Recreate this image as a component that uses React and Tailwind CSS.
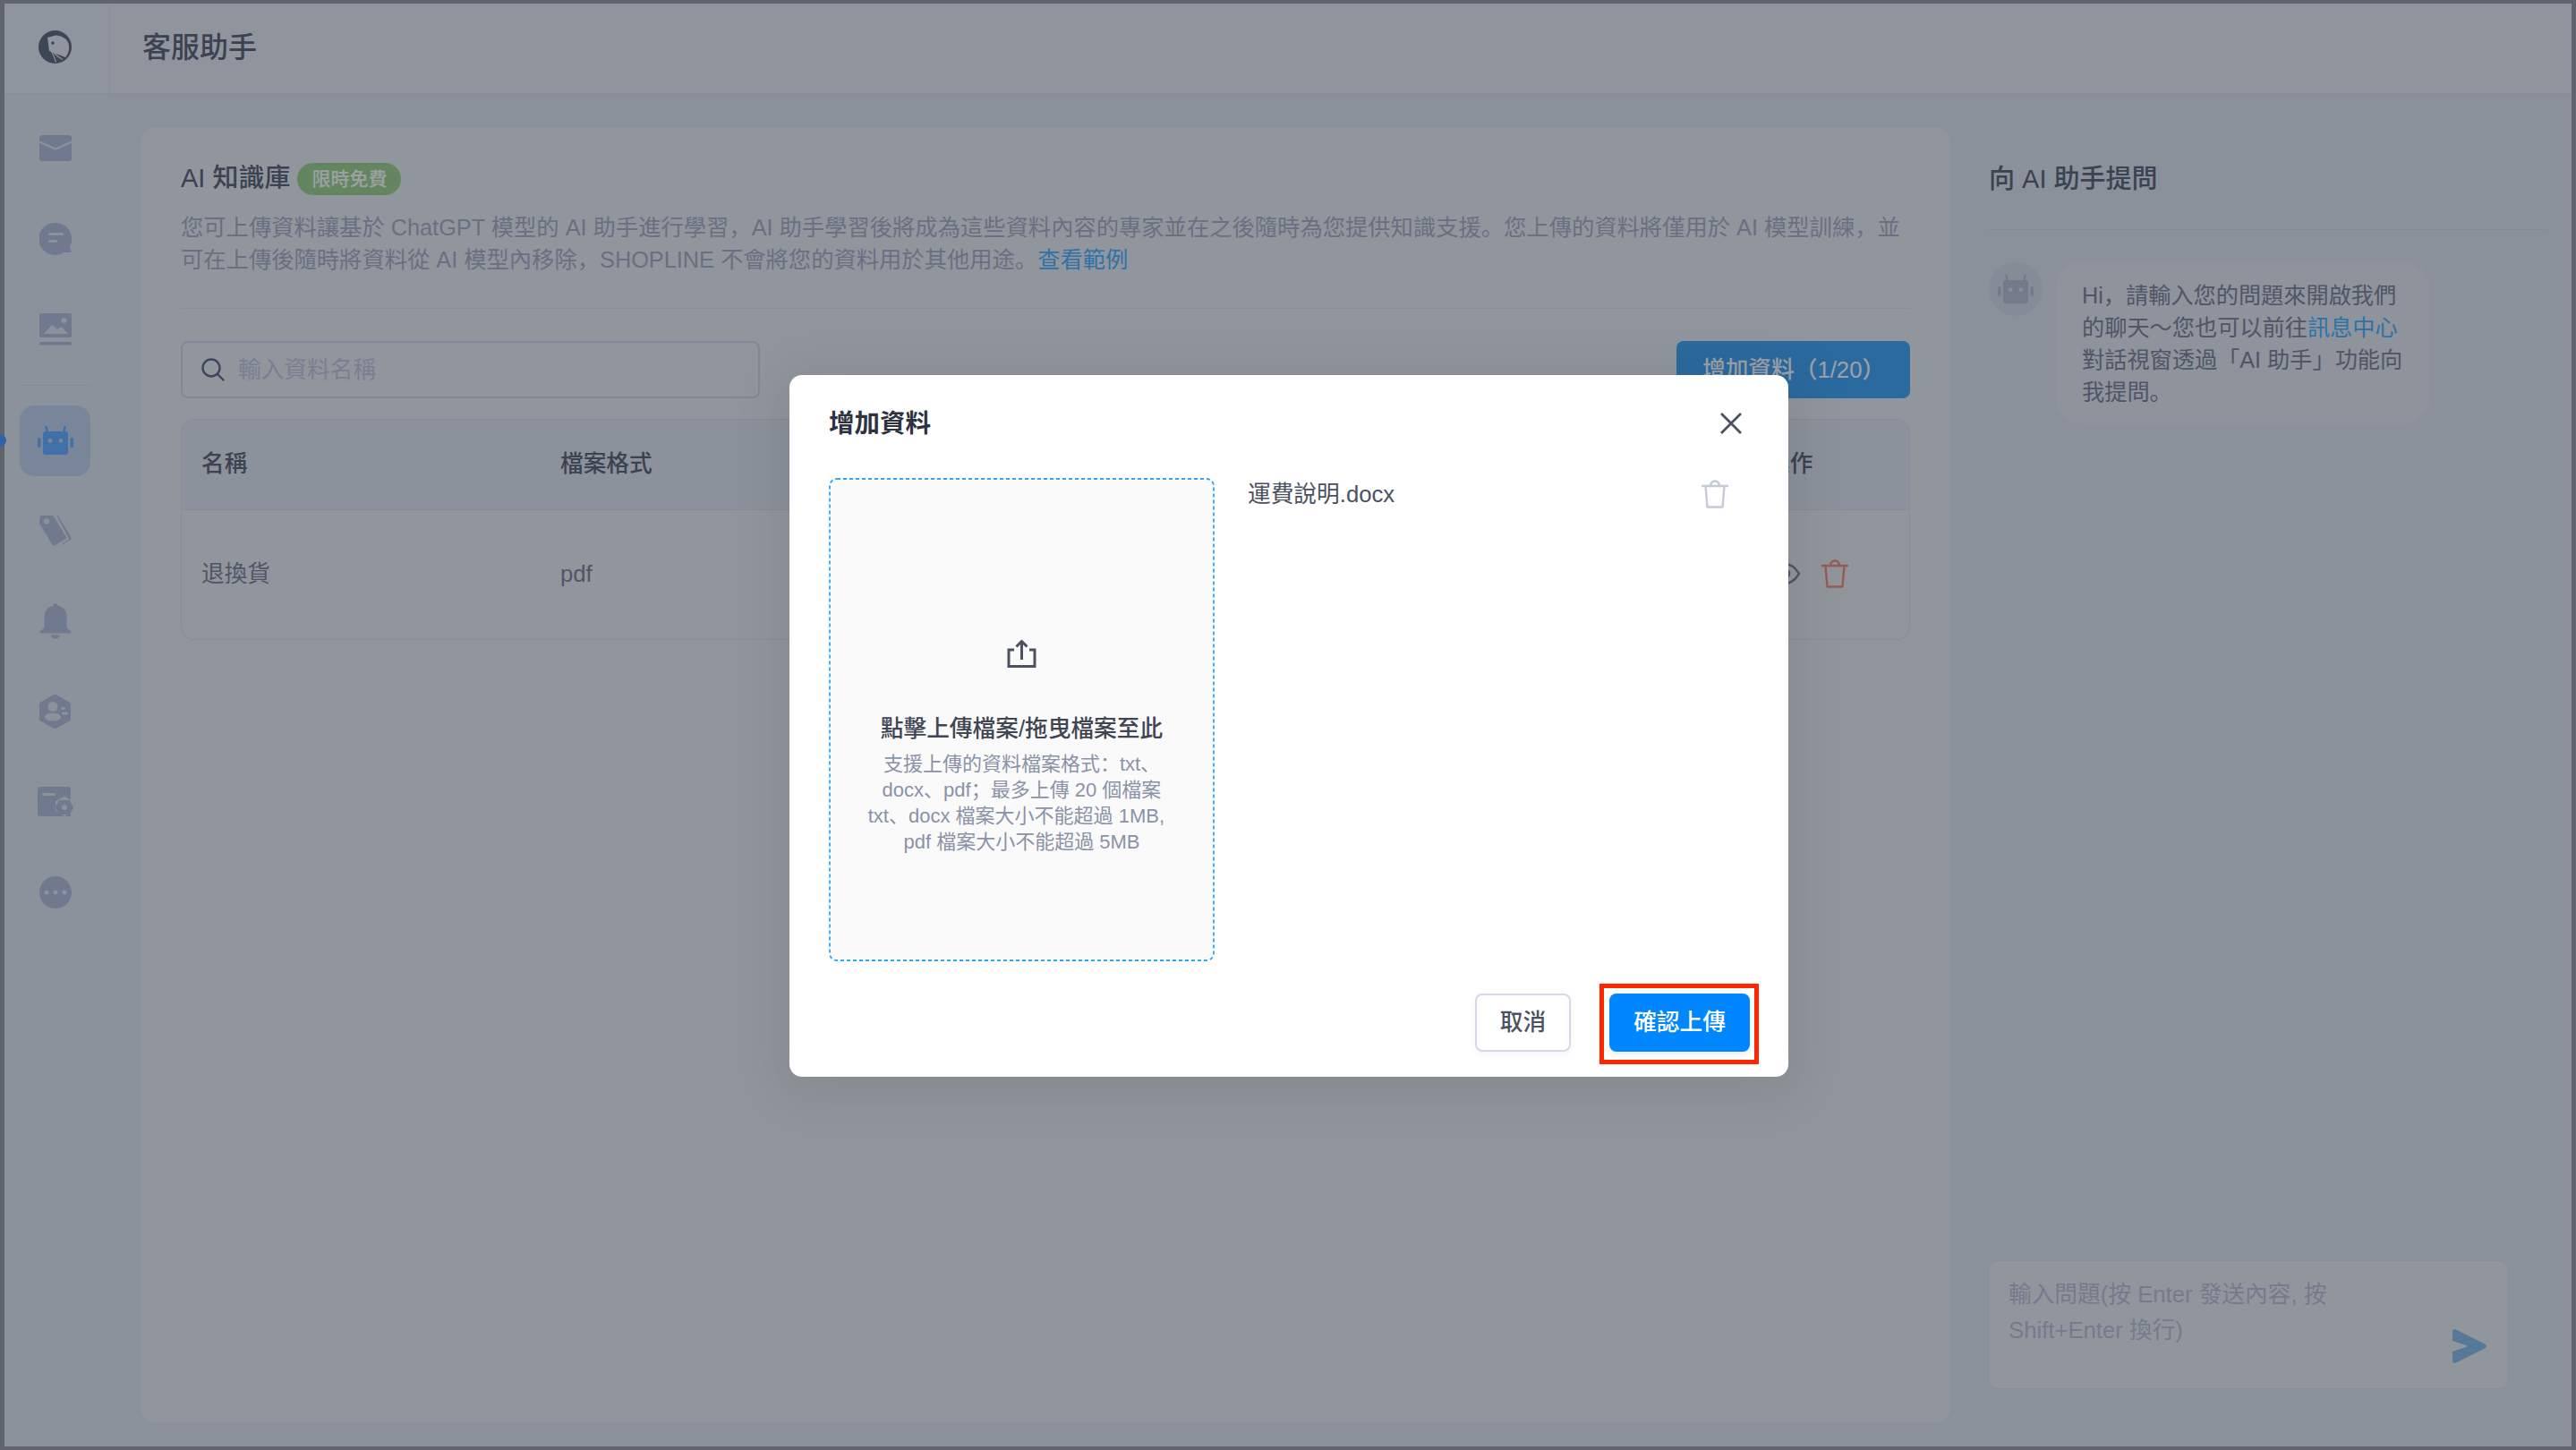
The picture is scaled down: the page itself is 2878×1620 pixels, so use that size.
import React from "react";

const Trash = ({ className }) => (
  <svg className={className} viewBox="0 0 30 32" fill="none" stroke="currentColor" strokeWidth="2.4" strokeLinejoin="round" strokeLinecap="round">
    <path d="M1 7h28" />
    <path d="M4.5 7l2 23.5h17l2-23.5" />
    <path d="M10 7c.3-3.5 2.3-5.5 5-5.5s4.700 2 5 5.500" />
  </svg>
);

const Mail = () => (
  <svg width="36" height="29" viewBox="0 0 36 29">
    <rect width="36" height="29" rx="3" fill="#b6bcd7" />
    <path d="M0 7.500l18 8 18-8" fill="none" stroke="#e2e6ec" strokeWidth="2.400" />
  </svg>
);
const Chat = () => (
  <svg width="36" height="36" viewBox="0 0 36 36">
    <path d="M18 0a18 18 0 0 1 16 26.500l1.500 5c.3 1-.4 1.500-1 1.500H27a18 18 0 1 1-9-33z" fill="#b6bcd7" />
    <rect x="10" y="11" width="17" height="3" rx="1.500" fill="#e2e6ec" />
    <rect x="10" y="19" width="10" height="3" rx="1.500" fill="#e2e6ec" />
  </svg>
);
const ImageIcon = () => (
  <svg width="36" height="36" viewBox="0 0 36 36">
    <rect width="36" height="27" rx="2" fill="#b6bcd7" />
    <path d="M5 23l8-9c1-1 2-1 3 0l4 4 3-2c1-.7 2-.7 3 0l6 7z" fill="#e2e6ec" />
    <circle cx="27.500" cy="8" r="3" fill="#e2e6ec" />
    <rect y="32" width="36" height="3.500" rx="1.700" fill="#b6bcd7" />
  </svg>
);
const Robot = ({ color, eye, className }) => (
  <svg className={className} viewBox="0 0 40 32" fill={color}>
    <rect x="6" y="6" width="28" height="26" rx="3" />
    <path d="M11 7L9.500 1M29 7l1.500-6" stroke={color} strokeWidth="2.400" strokeLinecap="round" />
    <rect x="0" y="13" width="3.500" height="11" rx="1.700" />
    <rect x="36.500" y="13" width="3.500" height="11" rx="1.700" />
    <circle cx="14" cy="16.500" r="2.400" fill={eye} />
    <circle cx="26" cy="16.500" r="2.400" fill={eye} />
  </svg>
);
const Tags = () => (
  <svg width="36" height="36" viewBox="0 0 36 36" fill="#b6bcd7">
    <path d="M21 1.500l14.500 24c.5 1 .2 2-.7 2.500l-10 6c-.5.300-.8-.5-.3-.8l8-5.200c.6-.4.800-1 .4-1.700L20 2.500c-.4-.7.600-1.600 1-1z" />
    <path d="M3 1h11c1 0 1.700.4 2.200 1.200L30 25c.5.900.2 1.800-.6 2.300L17 34.500c-.9.500-1.800.300-2.300-.5L.6 11C.2 10.400 0 9.700 0 9l.5-5.500C.6 2 1.500 1 3 1z" />
    <circle cx="8" cy="7.500" r="3.200" fill="#e2e6ec" />
  </svg>
);
const Bell = () => (
  <svg width="36" height="40" viewBox="0 0 36 40" fill="#b6bcd7">
    <path d="M18 0c1.500 0 2.300 1 2.300 2.500C27 4 30.500 9 30.500 15v11c0 2 2.500 3.500 4.500 5 1.300 1 .8 2.500-.7 2.500H1.700C.2 33.500-.3 32 1 31c2-1.500 4.500-3 4.500-5V15c0-6 3.500-11 10.200-12.500C15.700 1 16.500 0 18 0z" />
    <path d="M13 35.500h10c-.5 2.500-2.500 4-5 4s-4.500-1.500-5-4z" />
  </svg>
);
const HexUser = () => (
  <svg width="35" height="38" viewBox="0 0 35 38">
    <path d="M17.500 0l17 9.500v19L17.500 38 .5 28.500v-19z" fill="#b6bcd7" stroke="#b6bcd7" strokeLinejoin="round" />
    <circle cx="15" cy="13.500" r="5.500" fill="#e2e6ec" />
    <ellipse cx="15" cy="25" rx="9" ry="4.500" fill="#e2e6ec" />
    <rect x="24" y="14" width="5" height="3" rx="1.500" fill="#e2e6ec" />
    <rect x="25" y="19.500" width="7" height="3" rx="1.500" fill="#e2e6ec" />
  </svg>
);
const ChatGear = () => (
  <svg width="40" height="33" viewBox="0 0 40 33">
    <path d="M3 0h31c2 0 3 1 3 3v30H6L1.500 32.500C.700 33 0 32.500 0 31.500V3c0-2 1-3 3-3z" fill="#b6bcd7" />
    <rect x="5" y="7" width="15" height="3" rx="1.500" fill="#e2e6ec" />
    <path d="M30 10.500l9.500 5.500v11L30 33l-10-6V16z" fill="#e2e6ec" />
    <path d="M24 15h12l4 8-4 8H24l-4.500-8z" fill="#b6bcd7" />
    <circle cx="30" cy="23" r="3" fill="#e2e6ec" />
  </svg>
);
const Dots = () => (
  <svg width="36" height="36" viewBox="0 0 36 36">
    <circle cx="18" cy="18" r="18" fill="#b6bcd7" />
    <circle cx="8" cy="18" r="2.500" fill="#e2e6ec" />
    <circle cx="18" cy="18" r="2.500" fill="#e2e6ec" />
    <circle cx="28" cy="18" r="2.500" fill="#e2e6ec" />
  </svg>
);
const Logo = () => (
  <svg width="39" height="37" viewBox="0 0 39 37">
    <circle cx="19.500" cy="18.500" r="18.500" fill="#626775" />
    <path d="M11 8l9-2.500c7 .5 12.500 3.500 14.500 9 1.500 5 0 12-3.500 15.500L13 23z" fill="#ebebf2" />
    <path d="M13 19c3 5 6 11 7.500 16.500M14 21c5 5 9 9 14 11.500M14 21l17 8" stroke="#ebebf2" strokeWidth="1.100" fill="none" />
    <circle cx="17" cy="14" r="1.800" fill="#626775" />
  </svg>
);

const NavItem = ({ children }) => <div className="flex h-[101px] w-full items-center justify-center">{children}</div>;

function Sidebar() {
  return (
    <aside className="flex w-[118px] shrink-0 flex-col border-r border-[#dfe2e8] bg-[#e2e6ec]">
      <div className="flex h-[101px] shrink-0 items-center justify-center border-b border-[#dde0e6] bg-[#e7ebf1] pb-[4px] pr-[4px]">
        <Logo />
      </div>
      <nav className="flex flex-col items-center pr-[4px] pt-[10px]">
        <NavItem><Mail /></NavItem>
        <NavItem><Chat /></NavItem>
        <NavItem><ImageIcon /></NavItem>
        <div className="mt-[12px] h-px w-[79px] bg-[#d8dce3]" />
        <div className="relative mt-[22px] flex h-[79px] w-[79px] items-center justify-center rounded-[16px] bg-[#c4d3ea]">
          <span className="absolute left-[-29px] top-[32px] h-[14px] w-[14px] rounded-full bg-[#4896fd]" />
          <Robot color="#67acff" eye="#c4d3ea" className="mb-[2px] h-[32px] w-[40px]" />
        </div>
        <div className="h-[10px]" />
        <NavItem><Tags /></NavItem>
        <NavItem><Bell /></NavItem>
        <NavItem><HexUser /></NavItem>
        <NavItem><ChatGear /></NavItem>
        <NavItem><Dots /></NavItem>
      </nav>
    </aside>
  );
}

function KnowledgeCard() {
  return (
    <section className="ml-[35px] mt-[38px] mb-[27px] flex w-[2020px] shrink-0 flex-col rounded-[14px] bg-[#ecedef] px-[44px] pt-[39px]">
      <div className="flex h-[36px] items-center">
        <h2 className="text-[29px] font-medium text-[#5c6170]">AI 知識庫</h2>
        <span className="ml-[8px] flex h-[36px] w-[116px] items-center justify-center rounded-full bg-[#9fd389] text-[21px] font-medium text-white">限時免費</span>
      </div>
      <p className="mt-[18px] whitespace-nowrap border-b border-[#dfe0e6] pb-[36px] text-[25.300px] leading-[36px] text-[#a9adc0]">
        您可上傳資料讓基於 ChatGPT 模型的 AI 助手進行學習，AI 助手學習後將成為這些資料內容的專家並在之後隨時為您提供知識支援。您上傳的資料將僅用於 AI 模型訓練，並
        <br />
        可在上傳後隨時將資料從 AI 模型內移除，SHOPLINE 不會將您的資料用於其他用途。<span className="text-[#48b1ff]">查看範例</span>
      </p>
      <div className="mt-[36px] flex items-center justify-between">
        <div className="flex h-[64px] w-[647px] items-center rounded-[8px] border-2 border-[#cfd4e3] pl-[21px] text-[25.700px] text-[#c4c7da]">
          <svg width="26" height="26" viewBox="0 0 26 26" fill="none" stroke="#5f6780" strokeWidth="2.400" strokeLinecap="round">
            <circle cx="11" cy="11" r="9.500" />
            <path d="M18 18l6.500 6.500" />
          </svg>
          <span className="ml-[15px]">輸入資料名稱</span>
        </div>
        <button className="h-[64px] w-[261px] rounded-[8px] bg-[#41a3f2] pl-[4px] text-left text-[25.700px] font-medium text-white">
          <span className="ml-[25px]">增加資料（1/20）</span>
        </button>
      </div>
      <div className="mt-[23px] overflow-hidden rounded-[14px] border border-[#dadce3]">
        <div className="flex h-[101px] items-center border-b border-[#dadce3] bg-[#e2e6ec] pb-[2px] pl-[22px] text-[25.700px] font-medium text-[#5c6170]">
          <span className="w-[401px]">名稱</span>
          <span className="w-[1348px]">檔案格式</span>
          <span>操作</span>
        </div>
        <div className="flex h-[144px] items-center pb-[2px] pl-[22px] text-[25.700px] text-[#7d8293]">
          <span className="w-[401px]">退換貨</span>
          <span className="w-[1350px]">pdf</span>
          <svg width="36" height="26" viewBox="0 0 36 26" fill="none" stroke="#7d8293" strokeWidth="2.400">
            <path d="M2 13C7 5 12 2 18 2s11 3 16 11c-5 8-10 11-16 11S7 21 2 13z" />
            <circle cx="18" cy="13" r="5" />
          </svg>
          <Trash className="ml-[23px] h-[32px] w-[30px] text-[#f58a78]" />
        </div>
      </div>
    </section>
  );
}

function AssistantPanel() {
  return (
    <section className="flex flex-1 flex-col pl-[44px] pr-[29px]">
      <h2 className="mt-[38px] flex h-[114px] items-center border-b border-[#d8dbe2] pt-[2px] text-[29px] font-medium text-[#5c6170]">
        向 AI 助手提問
      </h2>
      <div className="mt-[36px] flex gap-[15px]">
        <div className="flex h-[60px] w-[60px] items-center justify-center rounded-full bg-[#d9dde5]">
          <Robot color="#b9becf" eye="#d9dde5" className="h-[32px] w-[40px]" />
        </div>
        <div className="w-[417px] whitespace-nowrap rounded-[28px] bg-[#e7e8ed] pb-[17px] pl-[29px] pr-[20px] pt-[19px] text-[25.200px] leading-[36px] text-[#7d8293]">
          Hi，請輸入您的問題來開啟我們
          <br />
          的聊天～您也可以前往<span className="text-[#48b1ff]">訊息中心</span>
          <br />
          對話視窗透過「AI 助手」功能向
          <br />
          我提問。
        </div>
      </div>
      <div className="relative mb-[64px] mt-auto h-[144px] w-[580px] rounded-[10px] border border-[#dfe1e8] bg-[#ecedef] px-[21px] pt-[17px] text-[25.700px] leading-[40px] text-[#bcc0d2]">
        輸入問題(按 Enter 發送內容, 按
        <br />
        Shift+Enter 換行)
        <svg className="absolute right-[23px] top-[76px]" width="38" height="38" viewBox="0 0 38 38" fill="#8bbce8">
          <path d="M0 3c0-2.500 2-3.500 4-2.500l32 16c2.500 1.300 2.500 3.700 0 5l-32 16c-2 1-4 0-4-2.500V25l16-5.500c.5-.2.5-.8 0-1L0 13z" />
        </svg>
      </div>
    </section>
  );
}

function UploadModal() {
  return (
    <div className="w-[1116px] rounded-[14px] bg-white pt-[36px] shadow-[0_10px_60px_20px_rgba(0,0,0,0.07)]">
      <div className="flex h-[36px] items-center justify-between pl-[44px] pr-[51px]">
        <h3 className="text-[28.500px] font-bold text-[#2d3340]">增加資料</h3>
        <svg width="26" height="26" viewBox="0 0 26 26" fill="none" stroke="#4b5160" strokeWidth="2.800">
          <path d="M2 2l22 22M24 2L2 24" />
        </svg>
      </div>
      <div className="mt-[43px] flex h-[540px] gap-[37px] pl-[44px] pr-[67px]">
        <div className="relative flex h-full w-[431px] shrink-0 flex-col items-center rounded-[8px] bg-[#fafafa] pt-[181px] text-center">
          <svg className="absolute inset-0" width="431" height="540" viewBox="0 0 431 540" fill="none">
            <rect x="1" y="1" width="429" height="538" rx="8" stroke="#2ea6ff" strokeWidth="1.800" strokeDasharray="4 3" />
          </svg>
          <svg width="33" height="31" viewBox="0 0 33 31" fill="none" stroke="#4b5160" strokeWidth="3">
            <path d="M8 11H2v18.500h29V11h-6" />
            <path d="M16.500 22V2M10.500 7.500l6-6 6 6" />
          </svg>
          <div className="mt-[50px] text-[25.700px] font-medium leading-[36px] text-[#3f4552]">點擊上傳檔案/拖曳檔案至此</div>
          <div className="mt-[7px] whitespace-nowrap text-[22px] leading-[29px] text-[#8a92a8]">
            支援上傳的資料檔案格式：txt、
            <br />
            docx、pdf；最多上傳 20 個檔案
            <br />
            txt、docx 檔案大小不能超過 1MB,{"\u00A0\u00A0"}
            <br />
            pdf 檔案大小不能超過 5MB
          </div>
        </div>
        <div className="flex h-[36px] flex-1 items-center justify-between">
          <span className="text-[25.700px] text-[#4b5160]">運費說明.docx</span>
          <Trash className="h-[32px] w-[30px] text-[#c5cad8]" />
        </div>
      </div>
      <div className="mt-[36px] flex justify-end gap-[43px] pb-[28px] pr-[43px]">
        <button className="h-[65px] w-[107px] rounded-[8px] border-2 border-[#d4d9e8] bg-white text-[25.700px] font-medium text-[#4b5160] shadow-[0_3px_6px_rgba(60,80,140,0.06)]">取消</button>
        <div className="relative">
          <button className="h-[65px] w-[157px] rounded-[8px] bg-[#0087ff] text-[25.700px] font-medium text-white shadow-[0_3px_6px_rgba(60,80,140,0.1)]">確認上傳</button>
          <div className="absolute -bottom-[14px] -left-[11px] -right-[10px] -top-[11px] border-[5px] border-[#ff2600]" />
        </div>
      </div>
    </div>
  );
}

export default function App() {
  return (
    <div className="relative h-[1620px] w-[2878px] overflow-hidden font-['Liberation_Sans','Noto_Sans_CJK_SC',sans-serif]">
      <div className="flex h-full w-full border-x-[5px] border-y-[4px] border-[#9999a2] bg-[#e0e4ea]">
        <Sidebar />
        <div className="flex min-w-0 flex-1 flex-col">
          <header className="flex h-[101px] shrink-0 items-center border-b border-[#dde0e6] bg-[#eaebef] pb-[3px] pl-[36px] text-[32px] font-medium text-[#5c6170]">客服助手</header>
          <main className="flex min-h-0 flex-1">
            <KnowledgeCard />
            <AssistantPanel />
          </main>
        </div>
      </div>
      <div className="absolute inset-0 flex items-center justify-center bg-[rgba(10,20,35,0.4)] pl-[2px] pt-[2px]">
        <UploadModal />
      </div>
    </div>
  );
}
